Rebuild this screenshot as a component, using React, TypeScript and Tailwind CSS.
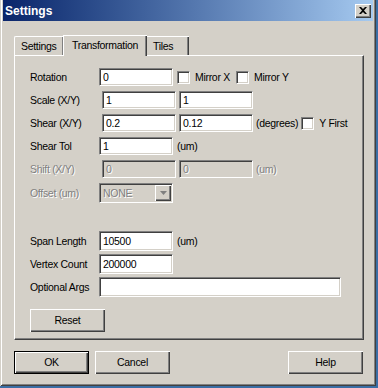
import React from "react";

const sunken =
  "border border-t-[#808080] border-l-[#808080] border-b-white border-r-white shadow-[inset_1px_1px_0_#404040,inset_-1px_-1px_0_#d4d0c8]";
const raised =
  "shadow-[inset_1px_1px_0_#fff,inset_-1px_-1px_0_#404040,inset_-2px_-2px_0_#808080]";

function Field({ value, width = 74, h = 18, disabled = false }: { value: string; width?: number; h?: number; disabled?: boolean }) {
  return (
    <div
      className={`${sunken} flex items-center pl-[3px] box-border ${disabled ? "bg-[#d4d0c8] text-[#808080] [text-shadow:1px_1px_0_#fff]" : "bg-white text-black"}`}
      style={{ width, height: h }}
    >
      {value}
    </div>
  );
}

function Check({ label }: { label: string }) {
  return (
    <div className="flex items-center">
      <div className={`${sunken} w-[13px] h-[13px] bg-white box-border`} />
      <span className="ml-[5px]">{label}</span>
    </div>
  );
}

function Label({ text, disabled = false }: { text: string; disabled?: boolean }) {
  return (
    <div className={`w-[69px] shrink-0 ${disabled ? "text-[#808080] [text-shadow:1px_1px_0_#fff]" : ""}`}>{text}</div>
  );
}

function Button({ text, width = 75, isDefault = false }: { text: string; width?: number; isDefault?: boolean }) {
  return (
    <div
      className={`h-[23px] flex items-center justify-center box-border bg-[#d4d0c8] ${isDefault ? "border border-black shadow-[inset_1px_1px_0_#fff,inset_-1px_-1px_0_#404040,inset_-2px_-2px_0_#808080]" : raised}`}
      style={{ width }}
    >
      {text}
    </div>
  );
}

export default function App() {
  return (
    <div className="w-[378px] h-[388px] bg-[#3a6ea5] font-['Liberation_Sans',sans-serif] text-[10.5px] tracking-[-0.3px] text-black leading-none">
      <div className="w-[376px] h-[386px] bg-[#d4d0c8] pl-[3px] pr-[3px] pb-[3px] box-border flex flex-col shadow-[inset_1px_0_0_#d4d0c8,inset_-1px_-1px_0_#404040,inset_2px_0_0_#fff,inset_-2px_-2px_0_#808080]">
        {/* title bar */}
        <div className="h-[21px] shrink-0 flex items-center justify-between bg-gradient-to-r from-[#0a246a] to-[#a6caf0] pl-[2px] pr-[2px]">
          <span className="text-white font-bold text-[12px] tracking-normal">Settings</span>
          <div className={`w-[16px] h-[14px] bg-[#d4d0c8] flex items-center justify-center ${raised}`}>
            <svg width="8" height="7" viewBox="0 0 8 7" className="-mt-px">
              <path d="M0 0h2l2 2 2-2h2L5 3.5 8 7H6L4 5 2 7H0l3-3.5z" fill="#000" />
            </svg>
          </div>
        </div>

        {/* tabs */}
        <div className="mt-[13px] ml-[11px] flex items-end h-[21px] relative z-10">
          <div className="w-[49px] h-[19px] border-t border-l border-white rounded-tl-[2px] shadow-[inset_-1px_0_0_#808080] relative flex items-center pl-[6px] pt-[1px]">
            Settings
          </div>
          <div className="w-[84px] h-[21px] -mb-px bg-[#d4d0c8] border-t border-l border-white shadow-[inset_-1px_0_0_#404040,inset_-2px_0_0_#808080] flex items-center pl-[8px] pb-[1px]">
            Transformation
          </div>
          <div className="w-[42px] h-[19px] border-t border-white shadow-[inset_-1px_0_0_#404040,inset_-2px_0_0_#808080] flex items-center pl-[6px] pt-[1px]">
            Tiles
          </div>
        </div>

        {/* panel */}
        <div className="ml-[11px] w-[350px] h-[285px] box-border border-t border-l border-white border-r border-b border-r-[#404040] border-b-[#404040] shadow-[inset_-1px_-1px_0_#808080] pl-[15px] pt-[12px]">
          <div className="flex flex-col gap-[5px]">
            <div className="flex items-center h-[18px]">
              <Label text="Rotation" />
              <Field value="0" />
              <div className="ml-[4px]"><Check label="Mirror X" /></div>
              <div className="ml-[6px]"><Check label="Mirror Y" /></div>
            </div>
            <div className="flex items-center h-[18px] gap-[3px]">
              <Label text="Scale (X/Y)" />
              <Field value="1" />
              <Field value="1" />
            </div>
            <div className="flex items-center h-[18px] gap-[3px]">
              <Label text="Shear (X/Y)" />
              <Field value="0.2" />
              <Field value="0.12" />
              <span>(degrees)</span>
              <Check label="Y First" />
            </div>
            <div className="flex items-center h-[18px]">
              <Label text="Shear Tol" />
              <Field value="1" />
              <span className="ml-[4px]">(um)</span>
            </div>
            <div className="flex items-center h-[18px] gap-[3px]">
              <Label text="Shift (X/Y)" disabled />
              <Field value="0" disabled />
              <Field value="0" disabled />
              <span className="text-[#808080] [text-shadow:1px_1px_0_#fff]">(um)</span>
            </div>
            <div className="flex items-center h-[20px]">
              <Label text="Offset (um)" disabled />
              <div className={`${sunken} w-[74px] h-[20px] box-border bg-[#d4d0c8] flex items-center justify-between pl-[3px] pr-[1px]`}>
                <span className="text-[#808080] [text-shadow:1px_1px_0_#fff]">NONE</span>
                <div className={`w-[16px] h-[16px] ${raised} flex items-center justify-center`}>
                  <svg width="7" height="4" viewBox="0 0 7 4">
                    <path d="M0 0h7L3.5 4z" fill="#808080" />
                  </svg>
                </div>
              </div>
            </div>
          </div>

          <div className="flex flex-col gap-[3px] mt-[28px]">
            <div className="flex items-center h-[20px]">
              <Label text="Span Length" />
              <Field value="10500" h={20} />
              <span className="ml-[4px]">(um)</span>
            </div>
            <div className="flex items-center h-[20px]">
              <Label text="Vertex Count" />
              <Field value="200000" h={20} />
            </div>
            <div className="flex items-center h-[20px]">
              <Label text="Optional Args" />
              <Field value="" h={20} width={242} />
            </div>
          </div>

          <div className="mt-[12px]">
            <Button text="Reset" />
          </div>
        </div>

        {/* bottom buttons */}
        <div className="ml-[11px] mt-[11px] w-[349px] flex items-center">
          <Button text="OK" isDefault />
          <div className="ml-[6px]"><Button text="Cancel" /></div>
          <div className="ml-auto"><Button text="Help" /></div>
        </div>
      </div>
    </div>
  );
}
